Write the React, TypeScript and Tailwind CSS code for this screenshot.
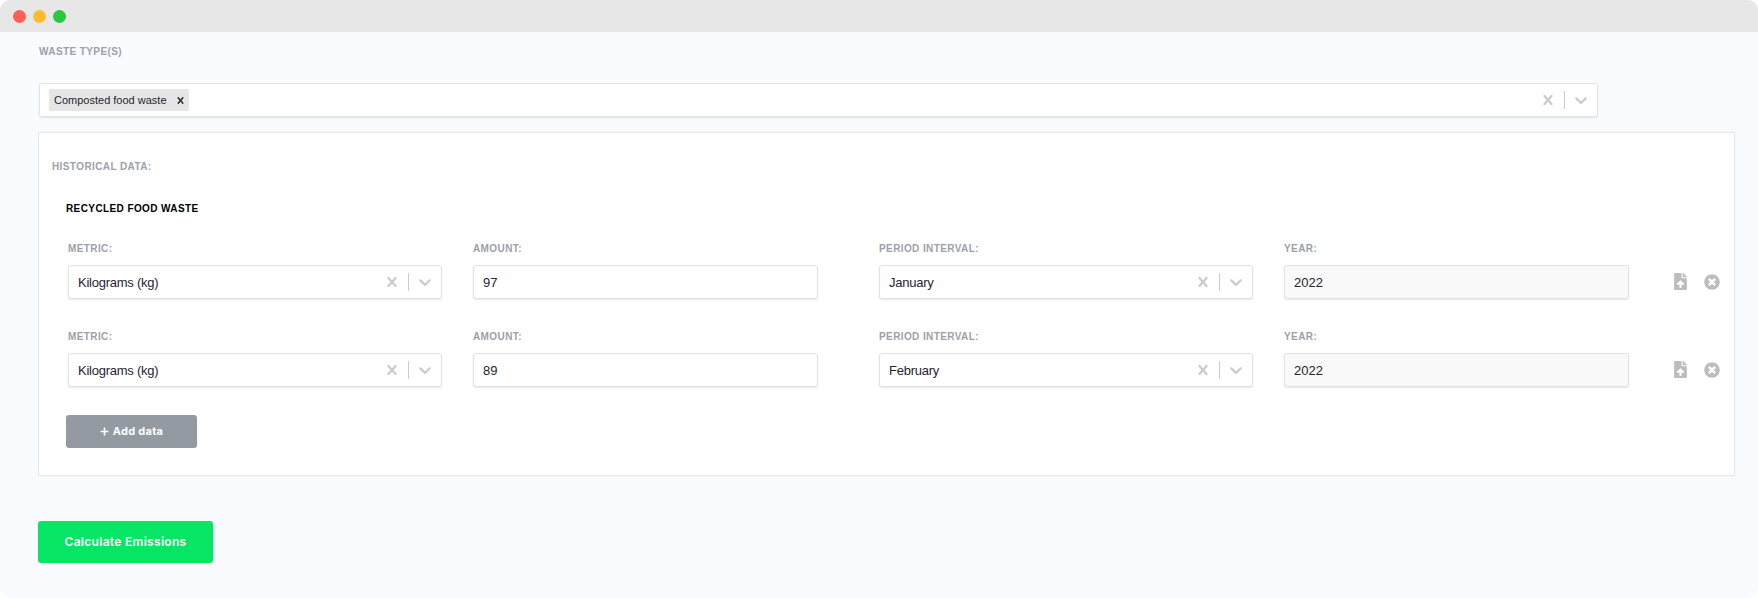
import { FaFileUpload, FaPlus, FaTimesCircle } from 'react-icons/fa';

const labelClass = "block text-[10px] leading-[12px] font-bold tracking-[0.4px] uppercase text-[#9ca1a9]";
const fieldClass = "h-[34px] w-full rounded-[3px] border border-[#e3e3e5] shadow-[0_1px_2px_rgba(0,0,0,0.1)] text-[13px] text-[#1f2430]";

function ClearIcon({ size = 20 }: { size?: number }) {
    return (
        <svg width={size} height={size} viewBox="0 0 20 20" fill="currentColor">
            <path d="M14.348 14.849c-0.469 0.469-1.229 0.469-1.697 0l-2.651-3.030-2.651 3.029c-0.469 0.469-1.229 0.469-1.697 0-0.469-0.469-0.469-1.229 0-1.697l2.758-3.15-2.759-3.152c-0.469-0.469-0.469-1.228 0-1.697s1.228-0.469 1.697 0l2.652 3.031 2.651-3.031c0.469-0.469 1.228-0.469 1.697 0s0.469 1.229 0 1.697l-2.758 3.152 2.758 3.15c0.469 0.469 0.469 1.229 0 1.698z" />
        </svg>
    );
}

function Chevron() {
    return (
        <svg width="20" height="20" viewBox="0 0 20 20" fill="currentColor">
            <path d="M4.516 7.548c0.436-0.446 1.043-0.481 1.576 0l3.908 3.747 3.908-3.747c0.533-0.481 1.141-0.446 1.576 0 0.436 0.445 0.408 1.197 0 1.615-0.406 0.418-4.695 4.502-4.695 4.502-0.217 0.223-0.502 0.335-0.789 0.335s-0.572-0.112-0.791-0.335c0 0-4.287-4.084-4.695-4.502s-0.436-1.17 0-1.615z" />
        </svg>
    );
}

function Indicators() {
    return (
        <div className="flex items-center text-[#cccccc] shrink-0 pr-[6px]">
            <ClearIcon />
            <span className="w-px h-[18px] bg-[#cccccc] mx-[6px]" />
            <Chevron />
        </div>
    );
}

function SelectField({ label, value }: { label: string; value: string }) {
    return (
        <div className="w-[374px] shrink-0">
            <label className={labelClass}>{label}</label>
            <div className={`${fieldClass} mt-[10px] bg-white flex items-center justify-between pl-[9px]`}>
                <span className="mt-px tracking-[-0.25px]">{value}</span>
                <Indicators />
            </div>
        </div>
    );
}

function InputField({ label, value, disabled }: { label: string; value: string; disabled?: boolean }) {
    return (
        <div className="w-[345px] shrink-0">
            <label className={labelClass}>{label}</label>
            <input
                readOnly
                value={value}
                className={`${fieldClass} mt-[10px] block px-[9px] pt-px outline-none ${disabled ? 'bg-[#f9f9f9]' : 'bg-white'}`}
            />
        </div>
    );
}

function DataRow({ month, amount }: { month: string; amount: string }) {
    return (
        <div className="flex items-start">
            <SelectField label="Metric:" value="Kilograms (kg)" />
            <div className="ml-[31px]">
                <InputField label="Amount:" value={amount} />
            </div>
            <div className="ml-[61px]">
                <SelectField label="Period Interval:" value={month} />
            </div>
            <div className="ml-[31px]">
                <InputField label="Year:" value="2022" disabled />
            </div>
            <div className="flex items-center ml-[43px] mt-[30px] text-[#bdbdbd] gap-[15px]">
                <FaFileUpload size={17} />
                <FaTimesCircle size={16} />
            </div>
        </div>
    );
}

export default function App() {
    return (
        <div className="w-[1758px] h-[598px] bg-white overflow-hidden" style={{ fontFamily: '"Liberation Sans", Arial, sans-serif' }}>
            <div className="w-full h-full rounded-[10px] overflow-hidden bg-[#fafbfe] flex flex-col">
                <div className="h-[32px] shrink-0 bg-[#e7e7e7] flex items-center gap-[7px] pl-[13px]">
                    <span className="w-[13px] h-[13px] rounded-full bg-[#ff5f57]" />
                    <span className="w-[13px] h-[13px] rounded-full bg-[#febc2e]" />
                    <span className="w-[13px] h-[13px] rounded-full bg-[#28c840]" />
                </div>

                <div className="pl-[38px] pr-[23px] pt-[14px]">
                    <label className={`${labelClass} ml-px`}>Waste Type(s)</label>

                    <div className="mt-[25px] ml-px w-[1559px] h-[34px] rounded-[3px] border border-[#e3e3e5] bg-white shadow-[0_1px_2px_rgba(0,0,0,0.1)] flex items-center justify-between pl-[9px]">
                        <div className="h-[22px] w-[140px] bg-[#e6e6e6] rounded-[2px] flex items-center pl-[5px] text-[11px] whitespace-nowrap text-[#1f2430]">
                            <span className="mt-px">Composted food waste</span>
                            <span className="ml-[7px] text-[#2d3440]"><ClearIcon size={13} /></span>
                        </div>
                        <Indicators />
                    </div>

                    <div className="mt-[15px] h-[344px] border border-[#e5e6e9] bg-white pl-[13px] pt-[28px]">
                        <label className={labelClass}>Historical Data:</label>
                        <h3 className="mt-[30px] ml-[14px] text-[10px] leading-[12px] font-bold tracking-[0.4px] uppercase text-black">Recycled Food Waste</h3>

                        <div className="ml-[16px] mt-[28px] flex flex-col gap-[32px]">
                            <DataRow month="January" amount="97" />
                            <DataRow month="February" amount="89" />
                        </div>

                        <button className="mt-[28px] ml-[14px] w-[131px] h-[33px] rounded-[3px] bg-[#949aa2] text-white text-[11px] font-bold tracking-[0.3px] flex items-center justify-center gap-[4px]" style={{ fontFamily: 'Inter, sans-serif' }}>
                            <FaPlus size={9} />
                            <span>Add data</span>
                        </button>
                    </div>

                    <button className="mt-[45px] w-[175px] h-[42px] rounded-[3px] bg-[#07e564] text-white text-[12px] font-semibold tracking-[0.3px]" style={{ fontFamily: 'Inter, sans-serif' }}>
                        Calculate Emissions
                    </button>
                </div>
            </div>
        </div>
    );
}
